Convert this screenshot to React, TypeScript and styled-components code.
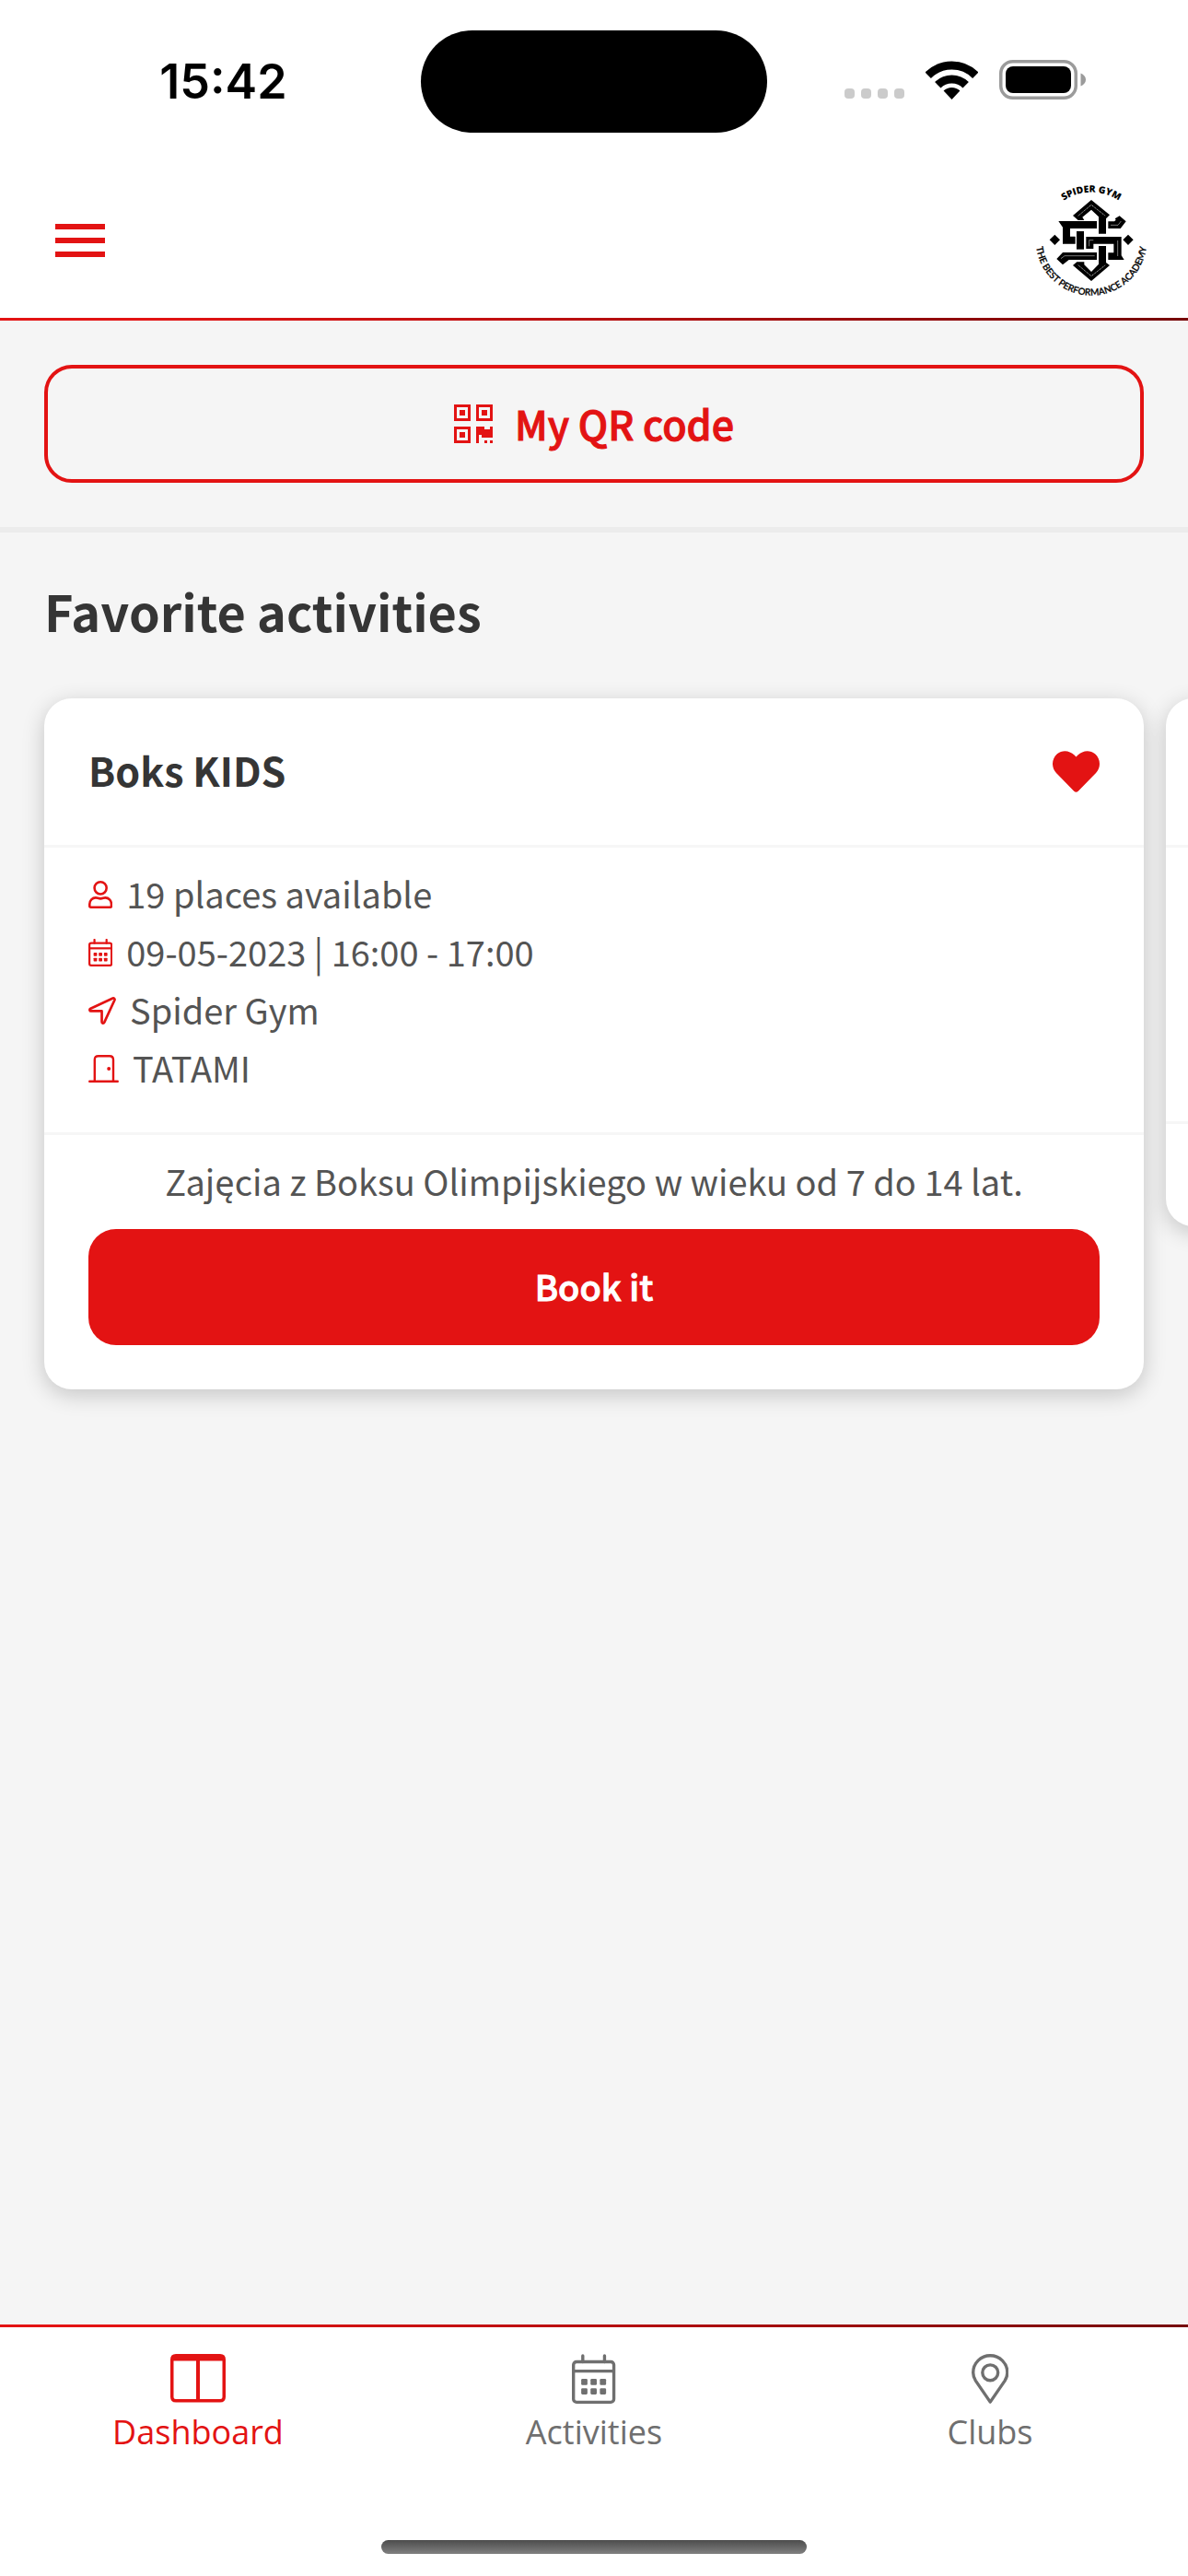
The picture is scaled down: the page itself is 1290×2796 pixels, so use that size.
import React from "react";
import styled, { createGlobalStyle } from "styled-components";
import { FaHeart } from "react-icons/fa";

const RED = "#e31313";
const GREY = "#6f6f6f";
const UI_FONT = '"Noto Sans CJK JP", "Source Sans Pro", "Noto Sans", sans-serif';

const GlobalStyle = createGlobalStyle`
  *, *::before, *::after { box-sizing: border-box; }
  body {
    margin: 0;
    background: #f5f5f5;
    color: #545454;
    font-family: ${UI_FONT};
    -webkit-font-smoothing: antialiased;
  }
  button { font-family: inherit; cursor: pointer; }
`;

const Screen = styled.div`
  display: flex;
  flex-direction: column;
  min-height: 100vh;
  overflow: hidden;
`;

const StatusBar = styled.div`
  display: grid;
  grid-template-columns: 1fr auto 1fr;
  align-items: center;
  padding: 33px 28px;
  background: #fff;
`;

const Clock = styled.time`
  text-align: center;
  color: #000;
  font: 600 52px/64px Inter, "Liberation Sans", sans-serif;
`;

const Island = styled.div`
  width: 376px;
  height: 111px;
  border-radius: 56px;
  background: #000;
`;

const StatusIcons = styled.div`
  display: flex;
  align-items: flex-end;
  justify-content: center;
  gap: 23px;
  padding-bottom: 4px;
`;

const SignalDots = styled.div`
  display: flex;
  gap: 7px;
  padding-bottom: 1px;

  span {
    width: 11px;
    height: 11px;
    border-radius: 4px;
    background: #cbcbcb;
  }
`;

const StatusGlyph = styled.svg`
  display: block;
  flex: none;
`;

const Header = styled.header`
  display: flex;
  align-items: center;
  justify-content: space-between;
  height: 168px;
  padding: 0 40px 0 60px;
  background: #fff;
`;

const AccentLine = styled.div`
  height: 3px;
  background: linear-gradient(90deg, ${RED} 0%, #e31313 12%, #b80f10 50%, #760809 100%);
`;

const MenuButton = styled.button`
  display: flex;
  flex-direction: column;
  gap: 9px;
  padding: 0;
  border: 0;
  background: none;

  span {
    width: 54px;
    height: 6px;
    background: ${RED};
  }
`;

const Logo = styled.svg`
  display: block;
  width: 130px;
  height: 130px;
  overflow: visible;
`;

const Main = styled.main`
  flex: 1;
`;

const QrSection = styled.section`
  padding: 48px;
  border-bottom: 6px solid #ececec;
`;

const QrButton = styled.button`
  display: flex;
  align-items: center;
  justify-content: center;
  gap: 24px;
  width: 100%;
  height: 128px;
  padding: 0;
  border: 4px solid ${RED};
  border-radius: 30px;
  background: transparent;
  color: ${RED};
  font-size: 43px;
  font-weight: 500;
  line-height: 64px;
  -webkit-text-stroke: 1px ${RED};

  svg { width: 42px; height: 42px; }
  span { padding-bottom: 2px; }
`;

const SectionTitle = styled.h2`
  margin: 0;
  padding: 45px 48px 31px;
  color: #353535;
  font-size: 54px;
  font-weight: 700;
  line-height: 80px;
`;

const Carousel = styled.div`
  display: flex;
  align-items: flex-start;
  gap: 24px;
  padding: 24px 48px 48px;
  overflow-x: auto;
  scrollbar-width: none;
`;

const Card = styled.article`
  flex: 0 0 100%;
  border-radius: 30px;
  background: #fff;
  box-shadow: 0 6px 24px rgba(0, 0, 0, 0.2);
`;

const CardHeader = styled.div`
  display: flex;
  align-items: center;
  justify-content: space-between;
  height: 162px;
  padding: 0 48px;
  border-bottom: 3px solid #f6f6f6;
`;

const CardTitle = styled.h3`
  margin: 0;
  padding-bottom: 6px;
  color: #353535;
  font-size: 43px;
  font-weight: 700;
  line-height: 64px;
`;

const FavoriteButton = styled.button`
  display: flex;
  padding: 0;
  border: 0;
  background: none;
  color: ${RED};
  font-size: 51px;
`;

const DetailList = styled.ul`
  min-height: 300px;
  margin: 0;
  padding: 19px 48px 38px;
  list-style: none;
  border-bottom: 3px solid #f6f6f6;
`;

const Detail = styled.li`
  display: flex;
  align-items: center;
  gap: 15px;
  height: 63px;
  font-size: 38px;
  line-height: 61px;

  svg {
    flex: none;
    height: 30px;
    color: ${RED};
  }
  span { padding-bottom: 2px; }
`;

const CardFooter = styled.div`
  min-height: 111px;
  padding: 18px 48px 48px;
`;

const Description = styled.p`
  margin: 0 0 21px;
  font-size: 38px;
  line-height: 63px;
  text-align: center;
`;

const BookButton = styled.button`
  display: block;
  width: 100%;
  height: 126px;
  padding: 0 0 4px;
  border: 0;
  border-radius: 30px;
  background: ${RED};
  color: #fff;
  font-size: 38px;
  font-weight: 500;
  -webkit-text-stroke: 1px #fff;
`;

const TabBar = styled.nav`
  display: grid;
  grid-template-columns: repeat(3, 1fr);
  padding: 29px 0 92px;
  background: #fff;
`;

const Tab = styled.a<{ $active?: boolean }>`
  display: flex;
  flex-direction: column;
  align-items: center;
  gap: 6px;
  color: ${({ $active }) => ($active ? RED : GREY)};
  font: 400 36px/50px "Open Sans", "Noto Sans", sans-serif;
  text-decoration: none;

  svg { height: 54px; }
`;

const HomeArea = styled.div`
  display: flex;
  justify-content: center;
  padding-bottom: 24px;
  background: #fff;
`;

const HomeIndicator = styled.div`
  width: 462px;
  height: 15px;
  border-radius: 8px;
  background: linear-gradient(180deg, #4c4c4c, #808080);
`;

const WifiIcon = () => (
  <StatusGlyph width="57" height="42" viewBox="0 0 57 42" fill="none" stroke="#000" strokeWidth="9">
    <path d="M2.7 15.7A36.5 36.5 0 0 1 54.3 15.7" />
    <path d="M13.3 26.3A21.5 21.5 0 0 1 43.7 26.3" />
    <path d="M28.5 42 19.6 32.4A13 13 0 0 1 37.4 32.4Z" fill="#000" stroke="none" />
  </StatusGlyph>
);

const BatteryIcon = () => (
  <StatusGlyph width="94" height="43" viewBox="0 0 94 43">
    <rect x="1.75" y="1.75" width="81.5" height="39.5" rx="13" fill="none" stroke="#9b9b9b" strokeWidth="3.5" />
    <rect x="7" y="7" width="71" height="29" rx="8" fill="#000" />
    <path d="M88.5 14.5C92 16 94 18.5 94 21.5S92 27 88.5 28.5Z" fill="#9b9b9b" />
  </StatusGlyph>
);

const SpiderGymLogo = () => (
  <Logo viewBox="60 48 390 390" role="img" aria-label="Spider Gym">
    <defs>
      <path id="logo-top" d="M94 247A161 161 0 0 1 416 247" />
      <path id="logo-bottom" d="M74 241A181 181 0 0 0 436 241" />
    </defs>
    <text fontFamily="Open Sans, sans-serif" fontSize="31" fontWeight="800" textAnchor="middle">
      <textPath href="#logo-top" startOffset="50%">SPIDER GYM</textPath>
    </text>
    <text
      fontFamily="Lato, sans-serif"
      fontSize="30"
      fontWeight="500"
      textAnchor="middle"
      stroke="#000"
      strokeWidth="1"
    >
      <textPath href="#logo-bottom" startOffset="50%">THE BEST PERFORMANCE ACADEMY</textPath>
    </text>
    <path d="M255 111 315 160 303 172V221H279V166L255 143 226 167 232 177H212L195 162Z" />
    <path d="M148 180H273V204H186V230H203V254H162V200Z" />
    <path d="M207 213H231V272H207Z" />
    <path d="M310 181H330L335 176 332 172 347 163 368 181 350 204H310Z" />
    <path d="M238 231H353V292L362 306H310V283H328V254H262V270H238Z" />
    <path d="M162 282H273V306H182L162 322 142 303Z" />
    <path d="M279 261H303V315L315 324 255 375 195 324 208 313H232V322L255 345 279 320Z" />
    <path d="M136 224 153 241 136 258 119 241ZM375 224 392 241 375 258 358 241Z" />
    <g fill="none" stroke="#fff" strokeWidth="2">
      <path d="M212 163 255 127 301 163" strokeDasharray="4 2" />
      <path d="M212 323 255 359 301 323" strokeDasharray="4 2" />
      <path d="M156 302 168 293H266M248 262V242H262M341 243V294M318 193H342L352 180" opacity=".7" />
    </g>
  </Logo>
);

const QrIcon = () => (
  <svg viewBox="0 0 14 14" fill="currentColor" fillRule="evenodd" aria-hidden="true">
    <path d="M0 0H6V6H0ZM1 1V5H5V1ZM2 2H4V4H2Z" />
    <path d="M8 0H14V6H8ZM9 1V5H13V1ZM10 2H12V4H10Z" />
    <path d="M0 8H6V14H0ZM1 9V13H5V9ZM2 10H4V12H2Z" />
    <path d="M8 8H11V9H13V8H14V12H10V11H9V14H8ZM11 13H12V14H11ZM13 13H14V14H13Z" />
  </svg>
);

const PersonIcon = () => (
  <svg viewBox="0 0 448 512" fill="none" stroke="currentColor" strokeWidth="44" strokeLinejoin="round" aria-hidden="true">
    <circle cx="224" cy="134" r="112" />
    <path d="M134 314C170 314 180 330 224 330S278 314 314 314C374 314 426 366 426 432V466Q426 490 402 490H46Q22 490 22 466V432C22 366 74 314 134 314Z" />
  </svg>
);

const CalendarIcon = ({ stroke = 32 }: { stroke?: number }) => (
  <svg viewBox="0 0 448 512" fill="none" stroke="currentColor" strokeWidth={stroke} aria-hidden="true">
    <rect x={stroke / 2} y="80" width={448 - stroke} height={432 - stroke / 2} rx="32" />
    <path d="M16 176H432" />
    <path d="M112 18V80M336 18V80" strokeLinecap="round" />
    <g fill="currentColor" stroke="none">
      {[256, 352].map((y) =>
        [96, 192, 288].map((x) => <rect key={`${x}-${y}`} x={x} y={y} width="64" height="64" rx="12" />)
      )}
    </g>
  </svg>
);

const ArrowIcon = () => (
  <svg viewBox="0 0 512 512" fill="none" stroke="currentColor" strokeWidth="46" strokeLinejoin="round" aria-hidden="true">
    <path d="M452 27 40 217C14 230 20 264 50 264H248V462C248 492 282 498 295 472L485 60C494 38 474 18 452 27Z" />
  </svg>
);

const DoorIcon = () => (
  <svg viewBox="0 0 33 30" fill="none" stroke="currentColor" strokeWidth="2.4" aria-hidden="true">
    <path d="M1.2 28.8H31.8" strokeLinecap="round" />
    <path d="M6.8 29V5.2Q6.8 1.2 10.8 1.2H23Q27 1.2 27 5.2V29" />
    <circle cx="22.2" cy="15" r="2" fill="currentColor" stroke="none" />
  </svg>
);

const DashboardIcon = () => (
  <svg viewBox="0 0 60 54" fill="currentColor" fillRule="evenodd" aria-hidden="true">
    <path d="M6 0H54Q60 0 60 6V46.5Q60 52.5 54 52.5H6Q0 52.5 0 46.5V6Q0 0 6 0ZM3.5 7.5V46.5Q3.5 49 6 49H28V7.5ZM32 7.5V49H54Q56.5 49 56.5 46.5V7.5Z" />
  </svg>
);

const PinIcon = () => (
  <svg viewBox="0 0 384 512" fill="none" stroke="currentColor" strokeWidth="32" strokeLinejoin="round" aria-hidden="true">
    <path d="M192 494 42 276C24 248 16 226 16 192A176 176 0 0 1 368 192C368 226 360 248 342 276Z" />
    <circle cx="192" cy="192" r="80" />
  </svg>
);

const details = [
  { icon: <PersonIcon />, text: "19 places available" },
  { icon: <CalendarIcon stroke={38} />, text: "09-05-2023 | 16:00 - 17:00" },
  { icon: <ArrowIcon />, text: "Spider Gym" },
  { icon: <DoorIcon />, text: "TATAMI" },
];

const tabs = [
  { icon: <DashboardIcon />, label: "Dashboard", active: true },
  { icon: <CalendarIcon />, label: "Activities" },
  { icon: <PinIcon />, label: "Clubs" },
];

export default function App() {
  return (
    <Screen>
      <GlobalStyle />
      <StatusBar>
        <Clock>15:42</Clock>
        <Island />
        <StatusIcons>
          <SignalDots>
            <span />
            <span />
            <span />
            <span />
          </SignalDots>
          <WifiIcon />
          <BatteryIcon />
        </StatusIcons>
      </StatusBar>
      <Header>
        <MenuButton type="button" aria-label="Menu">
          <span />
          <span />
          <span />
        </MenuButton>
        <SpiderGymLogo />
      </Header>
      <AccentLine />
      <Main>
        <QrSection>
          <QrButton type="button">
            <QrIcon />
            <span>My QR code</span>
          </QrButton>
        </QrSection>
        <section>
          <SectionTitle>Favorite activities</SectionTitle>
          <Carousel>
            <Card>
              <CardHeader>
                <CardTitle>Boks KIDS</CardTitle>
                <FavoriteButton type="button" aria-label="Favorite">
                  <FaHeart />
                </FavoriteButton>
              </CardHeader>
              <DetailList>
                {details.map(({ icon, text }) => (
                  <Detail key={text}>
                    {icon}
                    <span>{text}</span>
                  </Detail>
                ))}
              </DetailList>
              <CardFooter>
                <Description>Zajęcia z Boksu Olimpijskiego w wieku od 7 do 14 lat.</Description>
                <BookButton type="button">Book it</BookButton>
              </CardFooter>
            </Card>
            <Card>
              <CardHeader />
              <DetailList />
              <CardFooter />
            </Card>
          </Carousel>
        </section>
      </Main>
      <AccentLine />
      <TabBar>
        {tabs.map(({ icon, label, active }) => (
          <Tab key={label} href={`#${label.toLowerCase()}`} $active={active}>
            {icon}
            {label}
          </Tab>
        ))}
      </TabBar>
      <HomeArea>
        <HomeIndicator />
      </HomeArea>
    </Screen>
  );
}
